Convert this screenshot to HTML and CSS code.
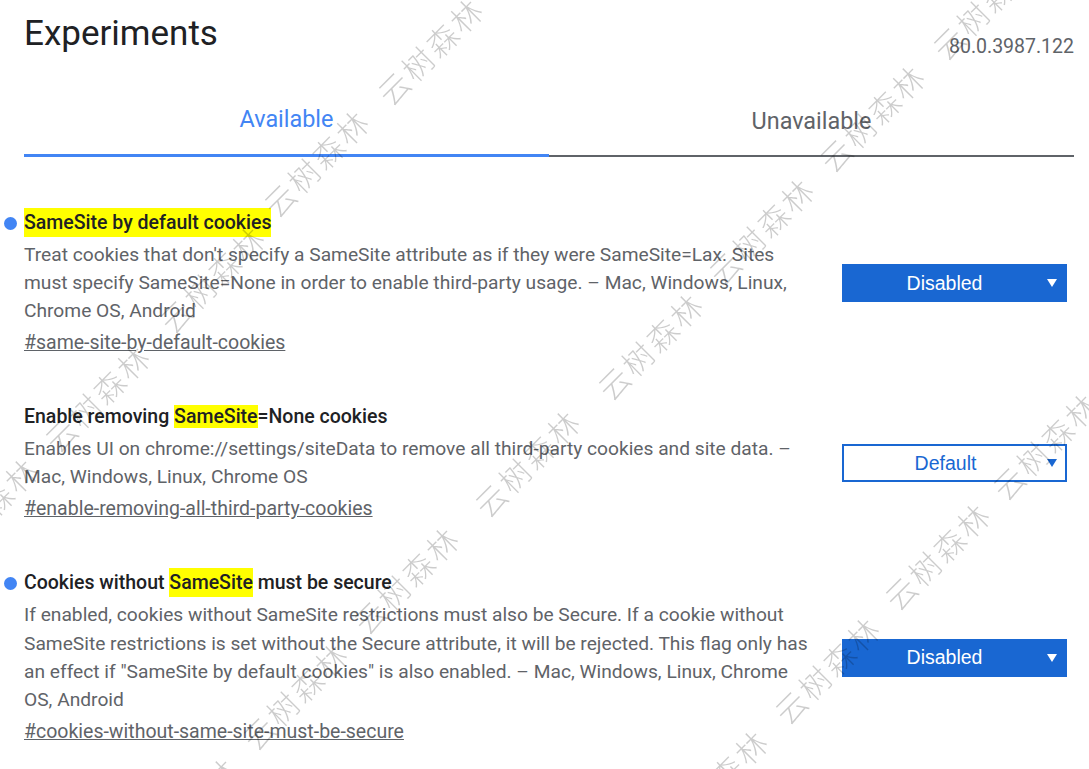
FILE: index.html
```html
<!DOCTYPE html>
<html lang="en">
<head>
<meta charset="utf-8">
<title>Experiments</title>
<link rel="stylesheet" href="styles.css">
</head>
<body>
<div class="page">
  <header class="header">
    <h1 class="title">Experiments</h1>
    <div class="version">80.0.3987.122</div>
  </header>

  <nav class="tabs">
    <div class="tab active">Available</div>
    <div class="tab inactive">Unavailable</div>
  </nav>

  <section class="experiments">
    <div class="experiment">
      <div class="exp-text">
        <h2 class="exp-name has-dot"><mark class="hl tall">SameSite by default cookies</mark></h2>
        <p class="exp-desc">Treat cookies that don't specify a SameSite attribute as if they were SameSite=Lax. Sites must specify SameSite=None in order to enable third-party usage. – Mac, Windows, Linux, Chrome OS, Android</p>
        <a class="exp-link" href="#same-site-by-default-cookies">#same-site-by-default-cookies</a>
      </div>
      <div class="select filled">
        <span class="select-label">Disabled</span>
        <svg class="select-arrow" width="10" height="8" viewBox="0 0 10 8"><polygon points="0,0 10,0 5,8" fill="currentColor"/></svg>
      </div>
    </div>

    <div class="experiment">
      <div class="exp-text">
        <h2 class="exp-name">Enable removing <mark class="hl">SameSite</mark>=None cookies</h2>
        <p class="exp-desc">Enables UI on chrome://settings/siteData to remove all third-party cookies and site data. – Mac, Windows, Linux, Chrome OS</p>
        <a class="exp-link" href="#enable-removing-all-third-party-cookies">#enable-removing-all-third-party-cookies</a>
      </div>
      <div class="select outlined">
        <span class="select-label">Default</span>
        <svg class="select-arrow" width="10" height="8" viewBox="0 0 10 8"><polygon points="0,0 10,0 5,8" fill="currentColor"/></svg>
      </div>
    </div>

    <div class="experiment">
      <div class="exp-text">
        <h2 class="exp-name has-dot">Cookies without <mark class="hl tall">SameSite</mark> must be secure</h2>
        <p class="exp-desc">If enabled, cookies without SameSite restrictions must also be Secure. If a cookie without SameSite restrictions is set without the Secure attribute, it will be rejected. This flag only has an effect if "SameSite by default cookies" is also enabled. – Mac, Windows, Linux, Chrome OS, Android</p>
        <a class="exp-link" href="#cookies-without-same-site-must-be-secure">#cookies-without-same-site-must-be-secure</a>
      </div>
      <div class="select filled">
        <span class="select-label">Disabled</span>
        <svg class="select-arrow" width="10" height="8" viewBox="0 0 10 8"><polygon points="0,0 10,0 5,8" fill="currentColor"/></svg>
      </div>
    </div>
  </section>
</div>

<div class="watermarks" aria-hidden="true">
  <span class="wm wm1">云树森林</span>
  <span class="wm wm2">云树森林</span>
  <span class="wm wm3">云树森林</span>
  <span class="wm wm4">云树森林</span>
  <span class="wm wm5">云树森林</span>
  <span class="wm wm6">云树森林</span>
  <span class="wm wm7">云树森林</span>
  <span class="wm wm8">云树森林</span>
  <span class="wm wm9">云树森林</span>
  <span class="wm wm10">云树森林</span>
  <span class="wm wm11">云树森林</span>
  <span class="wm wm12">云树森林</span>
  <span class="wm wm13">云树森林</span>
  <span class="wm wm14">云树森林</span>
  <span class="wm wm15">云树森林</span>
  <span class="wm wm16">云树森林</span>
  <span class="wm wm17">云树森林</span>
</div>
</body>
</html>
```

FILE: styles.css
```css
html, body {
  margin: 0;
  padding: 0;
  background: #ffffff;
}

body {
  font-family: Roboto, "Liberation Sans", sans-serif;
  color: #202124;
  overflow: hidden;
}

.page {
  padding: 0 15px 0 24px;
}

/* Header */
.header {
  display: flex;
  justify-content: space-between;
  align-items: flex-start;
}

.title {
  margin: 13px 0 0;
  font-size: 35px;
  line-height: 41px;
  font-weight: 400;
  color: #202124;
}

.version {
  margin-top: 35px;
  font-size: 19.5px;
  line-height: 23px;
  color: #5f6368;
}

/* Tabs */
.tabs {
  display: flex;
  margin-top: 22px;
}

.tab {
  flex: 1;
  text-align: center;
  font-size: 23.4px;
  line-height: 28px;
}

.tab.active {
  color: #4285f4;
  padding: 25px 0 21px;
  border-bottom: 3px solid #4285f4;
}

.tab.inactive {
  color: #5f6368;
  padding: 27px 0 20px;
  border-bottom: 2px solid #5f6368;
}

/* Experiments */
.experiments {
  margin-top: 52px;
}

.experiment {
  display: flex;
  align-items: center;
  gap: 23px;
}

.experiment + .experiment {
  margin-top: 46px;
}

.exp-text {
  width: 795px;
  flex: none;
}

.exp-name {
  position: relative;
  margin: 0;
  font-size: 19.5px;
  line-height: 28px;
  font-weight: 500;
  color: #202124;
}

.exp-name.has-dot::before {
  content: "";
  position: absolute;
  left: -20px;
  top: 8px;
  width: 13px;
  height: 13px;
  border-radius: 50%;
  background: #4285f4;
}

.hl {
  background: #ffff00;
  color: inherit;
}

.hl.tall {
  padding: 3px 0;
}

.exp-desc {
  margin: 4px 0 0;
  font-size: 19.2px;
  line-height: 28.1px;
  color: #5f6368;
}

.exp-link {
  display: inline-block;
  margin-top: 4px;
  font-size: 19.5px;
  line-height: 28px;
  color: #5f6368;
  text-decoration: underline;
}

/* Selects */
.select {
  box-sizing: border-box;
  flex: none;
  width: 225px;
  height: 38px;
  margin-right: 7px;
  display: flex;
  align-items: center;
  font-family: "Liberation Sans", Arial, sans-serif;
  font-size: 19.5px;
}

.select-label {
  flex: 1;
  text-align: center;
}

.select-arrow {
  flex: none;
  margin-right: 10px;
}

.select.filled {
  background: #1967d2;
  color: #ffffff;
}

.select.outlined {
  background: #ffffff;
  border: 2px solid #1967d2;
  color: #1967d2;
}

.select.outlined .select-arrow {
  margin-right: 8px;
}

/* Watermarks */
.watermarks {
  position: fixed;
  inset: 0;
  pointer-events: none;
  overflow: hidden;
}

.wm {
  position: absolute;
  font-family: "Noto Sans CJK SC", sans-serif;
  font-weight: 300;
  font-size: 31px;
  letter-spacing: 3px;
  line-height: 1;
  white-space: nowrap;
  color: rgba(0, 0, 0, 0.2);
  transform: translate(-50%, -50%) rotate(-45deg);
}

.wm1 { left: 430px; top: 50px; }
.wm2 { left: 316px; top: 162px; }
.wm3 { left: 212px; top: 278px; }
.wm4 { left: 97px; top: 397px; }
.wm5 { left: -15px; top: 510px; }
.wm6 { left: 985px; top: 5px; }
.wm7 { left: 872px; top: 117px; }
.wm8 { left: 761px; top: 230px; }
.wm9 { left: 650px; top: 345px; }
.wm10 { left: 527px; top: 462px; }
.wm11 { left: 406px; top: 579px; }
.wm12 { left: 295px; top: 695px; }
.wm13 { left: 185px; top: 810px; }
.wm14 { left: 715px; top: 782px; }
.wm15 { left: 1045px; top: 445px; }
.wm16 { left: 937px; top: 555px; }
.wm17 { left: 827px; top: 669px; }
```
